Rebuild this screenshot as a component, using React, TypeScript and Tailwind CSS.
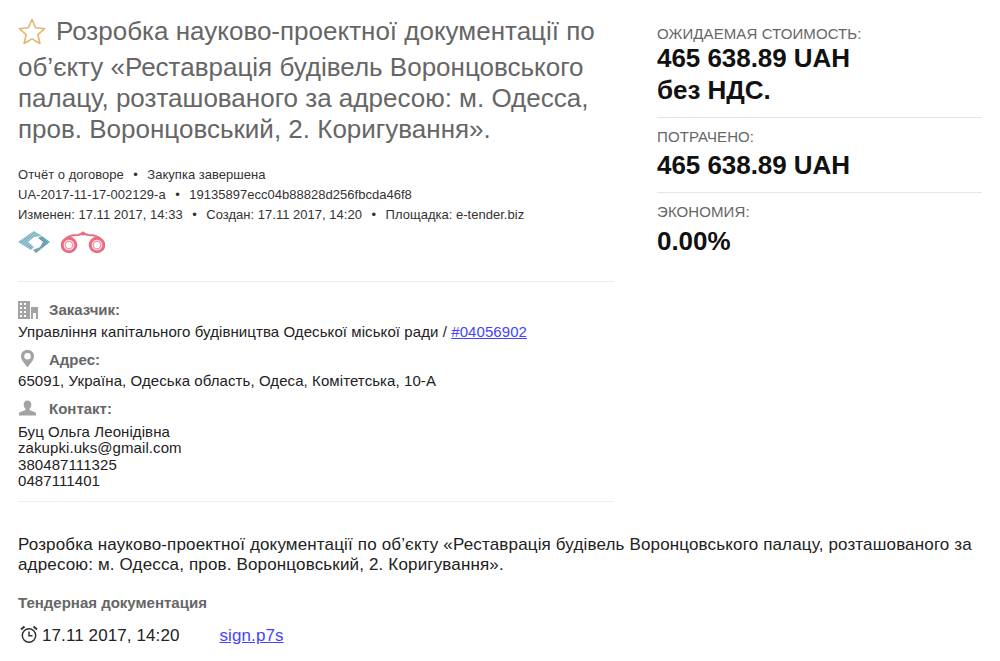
import { Fragment } from 'react';

const stats = [
  { label: 'ОЖИДАЕМАЯ СТОИМОСТЬ:', value: ['465 638.89 UAH', 'без НДС.'], gap: 'mt-[-1px]' },
  { label: 'ПОТРАЧЕНО:', value: ['465 638.89 UAH'], gap: 'mt-[3px]' },
  { label: 'ЭКОНОМИЯ:', value: ['0.00%'], gap: 'mt-[4px]' },
];

const Dot = () => <span className="mx-[9.500px]">•</span>;

const StarIcon = () => (
  <svg width="30" height="28" viewBox="0 0 30 28" className="mb-[6.500px] ml-[-1px] mr-[9px] inline-block align-[-11.500px]">
    <path d="M15 2.500l3.700 8.300 9 .9-6.800 6 2 8.800L15 21.900l-7.900 4.600 2-8.800-6.800-6 9-.9z" fill="none" stroke="#e3b673" strokeWidth="1.600" strokeLinejoin="round" />
  </svg>
);

const BuildingIcon = () => (
  <svg width="20" height="18" viewBox="0 0 20 18" className="mb-[2px]">
    <path fillRule="evenodd" fill="#a3a3a3" d="M0 0h12v18H0zM2 2v2h2V2zm4 0v2h2V2zM2 6v2h2V6zm4 0v2h2V6zm-4 4v2h2v-2zm4 0v2h2v-2zm-4 4v2h2v-2zm4 0v2h2v-2z" />
    <path fill="#a3a3a3" d="M13 6h7v12h-2v-6h-3v6h-2z" />
  </svg>
);

const PinIcon = () => (
  <svg width="13" height="19" viewBox="0 0 14 19" className="mb-[4px] ml-[3px]">
    <path fillRule="evenodd" fill="#a3a3a3" d="M7 0a7 7 0 0 1 7 7c0 4-4 8-7 12C4 15 0 11 0 7a7 7 0 0 1 7-7zm0 3.500a3.500 3.500 0 1 0 0 7 3.500 3.500 0 0 0 0-7z" />
  </svg>
);

const UserIcon = () => (
  <svg width="19" height="16" viewBox="0 0 20 16" className="mb-[4px]">
    <path fill="#a3a3a3" d="M10 0c2.600 0 4 1.900 4 4.400 0 1.800-.8 3.500-1.800 4.400v1.400L19 13v3H1v-3l6.800-2.800V8.800C6.800 7.900 6 6.200 6 4.400 6 1.900 7.400 0 10 0z" />
  </svg>
);

const ClockIcon = () => (
  <svg width="18" height="19" viewBox="0 0 18 19" fill="none" stroke="#333" strokeWidth="1.500" className="mb-[2px]">
    <circle cx="9" cy="10.500" r="6.700" />
    <path d="M9 6.500v4.300h3.500" />
    <path d="M1 4.500 4.500 1.500M17 4.500l-3.500-3" strokeWidth="2" />
  </svg>
);

const PlatformLogo = () => (
  <svg width="32" height="22" viewBox="0 0 32 22">
    <defs>
      <pattern id="lightHatch" width="2" height="2" patternUnits="userSpaceOnUse" patternTransform="rotate(45)">
        <rect width="2" height="2" fill="#a9cfda" />
        <rect width="1" height="2" fill="#6fa9bb" />
      </pattern>
      <pattern id="darkHatch" width="2" height="2" patternUnits="userSpaceOnUse" patternTransform="rotate(-45)">
        <rect width="2" height="2" fill="#8dbccb" />
        <rect width="1" height="2" fill="#4c8ca2" />
      </pattern>
    </defs>
    <path fill="url(#lightHatch)" d="M0 11 16 0l8 5-8 1-6 5 6 5-3 3z" />
    <path fill="url(#darkHatch)" d="M32 11 18 22l-3-3 7-3 3-5-5-4 4-2z" />
  </svg>
);

const Binoculars = () => (
  <svg width="44" height="23" viewBox="0 0 44 23" fill="none">
    <path d="M5 8C7 4.500 12 4 17 4l5-1.500L27 4c5 0 10 .5 12 4" stroke="#ec6c81" strokeWidth="2.200" />
    <circle cx="22" cy="2.500" r="2" fill="#ec6c81" />
    <circle cx="8" cy="14" r="6.800" fill="#fff" stroke="#ec6c81" strokeWidth="3" />
    <circle cx="36" cy="14" r="6.800" fill="#fff" stroke="#ec6c81" strokeWidth="3" />
    <circle cx="8" cy="14" r="3.800" stroke="#f29aaa" strokeWidth="1.400" />
    <circle cx="36" cy="14" r="3.800" stroke="#f29aaa" strokeWidth="1.400" />
  </svg>
);

const Section = ({ icon, title, children }: { icon: React.ReactNode; title: string; children: React.ReactNode }) => (
  <div>
    <div className="flex h-[22px] items-center">
      <span className="flex w-[31px] justify-start">{icon}</span>
      <span className="text-[15px] font-bold text-[#666]">{title}</span>
    </div>
    <div className="mt-[2px] text-[15px] leading-[16.500px] tracking-[0.08px] text-[#222]">{children}</div>
  </div>
);

export default function App() {
  return (
    <div className="h-[661px] w-[1000px] overflow-hidden bg-white font-['Liberation_Sans',Arial,sans-serif]">
      <div className="flex pl-[18px] pt-[16px]">
        <div className="w-[596px]">
          <h1 className="text-[26px] font-normal leading-[31px] text-[#666]">
            <StarIcon />
            Розробка науково-проектної документації по об’єкту «Реставрація будівель Воронцовського палацу, розташованого за адресою: м. Одесса, пров. Воронцовський, 2. Коригування».
          </h1>

          <div className="mt-[20px] text-[13px] leading-[20px] tracking-[0.02px] text-[#333]">
            <div>
              Отчёт о договоре
              <Dot />
              Закупка завершена
            </div>
            <div>
              UA-2017-11-17-002129-a
              <Dot />
              19135897ecc04b88828d256fbcda46f8
            </div>
            <div>
              Изменен: 17.11 2017, 14:33
              <Dot />
              Создан: 17.11 2017, 14:20
              <Dot />
              Площадка: e-tender.biz
            </div>
          </div>

          <div className="mt-[6px] flex items-center gap-[11px]">
            <PlatformLogo />
            <Binoculars />
          </div>

          <div className="mt-[27px] border-t border-[#eee] pt-[18px]">
            <div className="flex flex-col gap-[9px]">
              <Section icon={<BuildingIcon />} title="Заказчик:">
                Управління капітального будівництва Одеської міської ради /{' '}
                <a href="#" className="text-[#44f] underline">#04056902</a>
              </Section>
              <Section icon={<PinIcon />} title="Адрес:">
                65091, Україна, Одеська область, Одеса, Комітетська, 10-А
              </Section>
              <Section icon={<UserIcon />} title="Контакт:">
                <div className="pt-[1px]">Буц Ольга Леонідівна</div>
                <div>zakupki.uks@gmail.com</div>
                <div>380487111325</div>
                <div>0487111401</div>
              </Section>
            </div>
          </div>
          <div className="mt-[11px] border-t border-[#eee]" />
        </div>

        <div className="ml-[43px] w-[325px] pt-[9px]">
          {stats.map((stat, i) => (
            <Fragment key={stat.label}>
              {i > 0 && <div className="mb-[10px] mt-[11px] border-t border-[#e5e5e5]" />}
              <div className="text-[15px] leading-[18px] tracking-[0.1px] text-[#666]">{stat.label}</div>
              <div className={`${stat.gap} text-[26px] font-bold leading-[32px] tracking-[-0.05px] text-[#111]`}>
                {stat.value.map(line => (
                  <div key={line}>{line}</div>
                ))}
              </div>
            </Fragment>
          ))}
        </div>
      </div>

      <div className="mt-[33px] w-[982px] pl-[18px] text-[17px] leading-[20px] tracking-[0.155px] text-[#222]">
        Розробка науково-проектної документації по об’єкту «Реставрація будівель Воронцовського палацу, розташованого за адресою: м. Одесса, пров. Воронцовський, 2. Коригування».
      </div>

      <div className="mt-[19px] pl-[18px] text-[15px] font-bold leading-[18px] text-[#666]">Тендерная документация</div>

      <div className="mt-[11px] flex items-center pl-[20px] text-[17px] tracking-[0.1px] text-[#222]">
        <ClockIcon />
        <span className="ml-[4px]">17.11 2017, 14:20</span>
        <a href="#" className="ml-[40px] text-[#44f] underline">sign.p7s</a>
      </div>
    </div>
  );
}
